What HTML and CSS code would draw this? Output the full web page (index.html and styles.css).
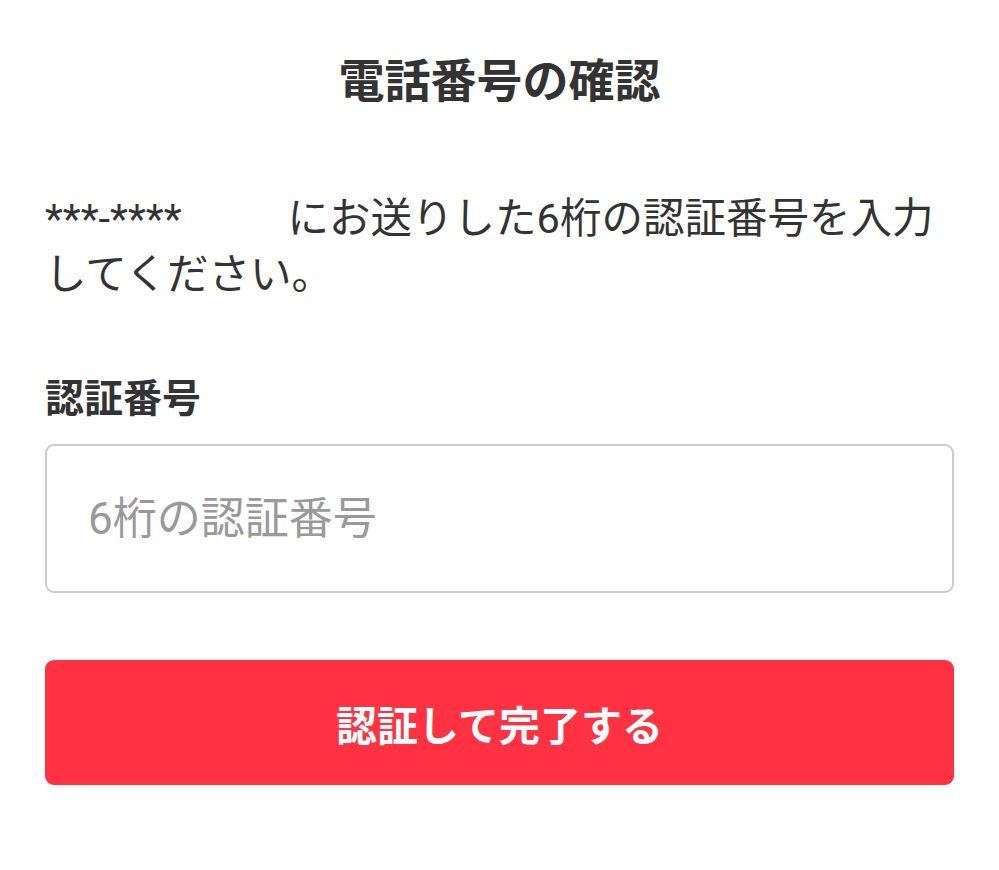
FILE: index.html
```html
<!DOCTYPE html>
<html lang="ja">
<head>
<meta charset="utf-8">
<title>電話番号の確認</title>
<link rel="stylesheet" href="styles.css">
</head>
<body>
<main class="page">
  <h1 class="title">電話番号の確認</h1>
  <p class="desc">***-****<span class="masked"></span>にお送りした6桁の認証番号を入力してください。</p>
  <label class="label" for="code">認証番号</label>
  <input class="field" id="code" type="text" placeholder="6桁の認証番号">
  <button class="submit" type="button">認証して完了する</button>
</main>
</body>
</html>
```
FILE: styles.css
```css
html, body {
  margin: 0;
  padding: 0;
  background: #ffffff;
}
body {
  font-family: Roboto, "Noto Sans CJK JP", sans-serif;
  color: #333333;
}
.page {
  display: flex;
  flex-direction: column;
  padding: 49px 45px 0;
}
.title {
  margin: 0;
  text-align: center;
  font-size: 46px;
  line-height: 64px;
  font-weight: 700;
  color: #333333;
}
.desc {
  margin: 78px 0 0;
  font-size: 41.5px;
  line-height: 56px;
  color: #333333;
}
.masked {
  display: inline-block;
  width: 106px;
  height: 1px;
}
.label {
  margin-top: 69px;
  font-size: 39px;
  line-height: 54px;
  font-weight: 700;
  color: #333333;
}
.field {
  margin-top: 18px;
  box-sizing: border-box;
  width: 100%;
  height: 149px;
  border: 2px solid #cccccc;
  border-radius: 9px;
  padding: 0 0 0 41px;
  font-family: Roboto, "Noto Sans CJK JP", sans-serif;
  font-size: 44px;
  color: #333333;
  background: #ffffff;
  outline: none;
}
.field::placeholder {
  color: #999999;
}
.submit {
  margin-top: 67px;
  width: 100%;
  height: 125px;
  border: none;
  border-radius: 9px;
  background: #fe3242;
  color: #ffffff;
  font-family: Roboto, "Noto Sans CJK JP", sans-serif;
  font-size: 41px;
  font-weight: 700;
  padding: 0;
}
```
